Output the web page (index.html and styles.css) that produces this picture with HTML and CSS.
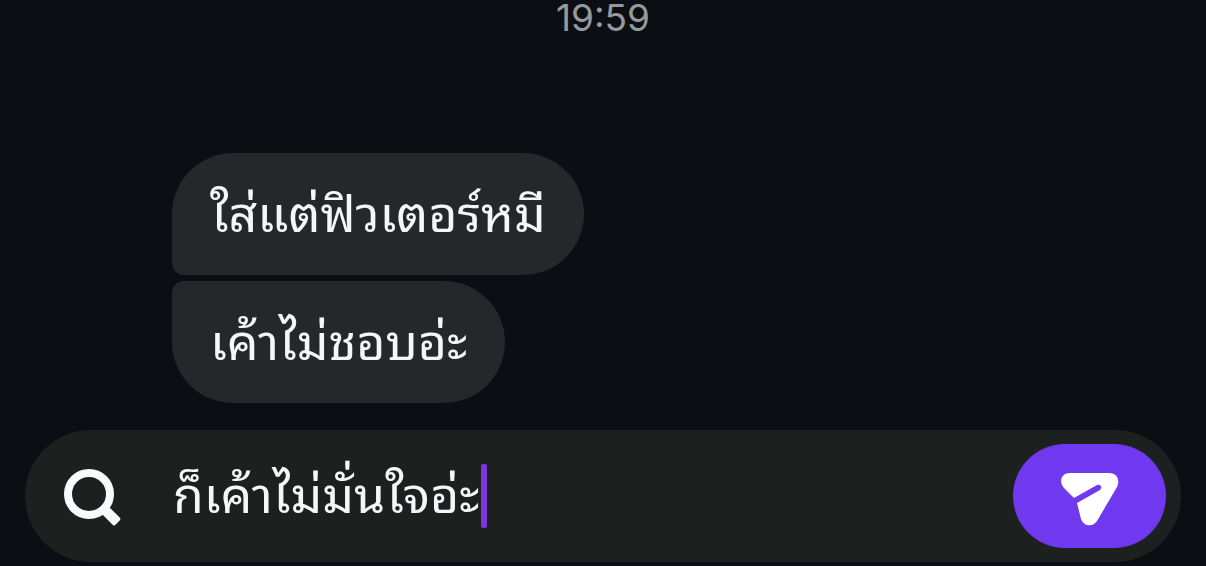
FILE: index.html
```html
<!DOCTYPE html>
<html lang="th">
<head>
    <meta charset="UTF-8">
    <meta name="viewport" content="width=device-width, initial-scale=1">
    <title>Chat</title>
    <link rel="stylesheet" href="styles.css">
</head>
<body>
<main class="chat">
    <time class="timestamp">19:59</time>
    <div class="messages">
        <p class="bubble bubble-first">ใส่แต่ฟิวเตอร์หมี</p>
        <p class="bubble bubble-last">เค้าไม่ชอบอ่ะ</p>
    </div>
</main>
<form class="composer">
    <button type="button" class="search-button" aria-label="Search">
        <svg width="60" height="60" viewBox="0 0 60 60">
            <circle cx="28" cy="28" r="21" fill="none" stroke="#f7fbfc" stroke-width="8"/>
            <rect x="58" y="-5" width="22" height="10" rx="2" fill="#f7fbfc" transform="rotate(45)"/>
        </svg>
    </button>
    <div class="field">
        <input type="text" class="message-input" aria-label="Message" value="ก็เค้าไม่มั่นใจอ่ะ">
        <span class="caret"></span>
    </div>
    <button type="submit" class="send-button" aria-label="Send">
        <svg width="60" height="56" viewBox="0 0 60 56">
            <path fill="#fff" d="M10 2H49C58 2 60 10 57 16L37 50C33 56 24 56 21 48L17 32L40 19Q42 17 41 15Q39 13 37 14L14 27L4 17C-2 10 2 2 10 2Z"/>
        </svg>
    </button>
</form>
</body>
</html>
```
FILE: styles.css
```css
body {
    min-height: 100vh;
    margin: 0;
    display: flex;
    flex-direction: column;
    background: #0b0e13;
    color: #f4f7f8;
    font-family: "Liberation Sans", "Noto Sans Thai Looped", Loma, Waree, sans-serif;
}

.chat {
    flex: 1;
    display: flex;
    flex-direction: column;
}

.timestamp {
    align-self: center;
    height: 36px;
    line-height: 36px;
    font-family: Inter, sans-serif;
    font-size: 37px;
    color: #98999c;
}

.messages {
    display: flex;
    flex-direction: column;
    align-items: flex-start;
    gap: 6px;
    padding: 117px 172px 24px;
}

.bubble {
    margin: 0;
    padding: 2px 38px 0;
    line-height: 120px;
    font-size: 50px;
    background: #24282b;
    white-space: nowrap;
}

.bubble-first {
    border-radius: 61px 61px 61px 12px;
}

.bubble-last {
    border-radius: 12px 61px 61px 61px;
}

.composer {
    display: flex;
    align-items: center;
    height: 132px;
    box-sizing: border-box;
    margin: 0 25px 4px;
    padding: 0 15px 0 36px;
    border-radius: 66px;
    background: #1c2120;
}

button {
    display: flex;
    align-items: center;
    justify-content: center;
    box-sizing: border-box;
    padding: 0;
    border: 0;
    background: none;
    cursor: pointer;
}

.search-button {
    width: 60px;
    height: 60px;
}

.field {
    flex: 1;
    display: flex;
    align-items: center;
    margin-left: 50px;
}

.message-input {
    field-sizing: content;
    height: 100px;
    box-sizing: border-box;
    padding: 0 2px 12px;
    border: 0;
    outline: 0;
    background: none;
    color: #f4f7f8;
    font: inherit;
    font-size: 50px;
}

.caret {
    width: 6px;
    height: 64px;
    border-radius: 2px;
    background: #7c35df;
}

.send-button {
    width: 153px;
    height: 104px;
    padding-top: 6px;
    border-radius: 52px;
    background: #7039ef;
}
```
